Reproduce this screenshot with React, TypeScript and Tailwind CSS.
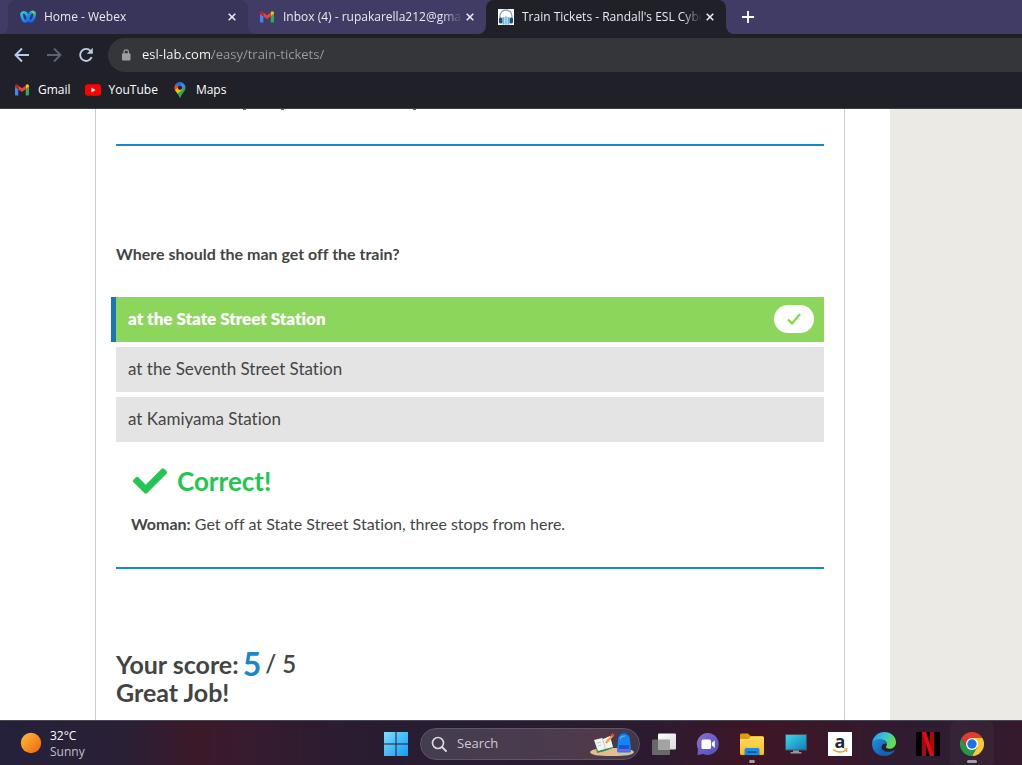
import React from "react";
import { FaCheck } from "react-icons/fa";

function GmailIcon() {
  return (
    <svg className="h-4 w-4 shrink-0" viewBox="0 0 16 16" aria-hidden="true">
      <path d="M1 4.200V12.500c0 .6.4 1 1 1h2.300V7.200L1 4.700z" fill="#4285f4" />
      <path d="M11.700 13.500H14c.6 0 1-.4 1-1V4.700l-3.300 2.500z" fill="#34a853" />
      <path d="M11.700 3.600v3.600L15 4.700V4.100c0-1.500-1.700-2.300-2.800-1.400z" fill="#fbbc04" />
      <path d="M4.300 7.200V3.500L8 6.300l3.700-2.800v3.700L8 10z" fill="#ea4335" />
      <path d="M1 4.100v.6l3.300 2.500V3.500l-.6-.8C2.600 1.800 1 2.600 1 4.100z" fill="#c5221f" />
    </svg>
  );
}

function WebexIcon() {
  return (
    <svg className="h-4 w-4 shrink-0" viewBox="0 0 16 16" aria-hidden="true">
      <defs>
        <linearGradient id="wx-a" x1="0" y1="0" x2="1" y2="1">
          <stop offset="0" stopColor="#27c6f5" />
          <stop offset="1" stopColor="#1560f0" />
        </linearGradient>
        <linearGradient id="wx-b" x1="0" y1="0" x2="0" y2="1">
          <stop offset="0" stopColor="#4fdc6c" />
          <stop offset="0.4" stopColor="#2a8fe8" />
          <stop offset="1" stopColor="#1b5ff5" />
        </linearGradient>
      </defs>
      <path d="M10.500 4C11.500 2.900 13 2.800 14.200 3.700c.8 2-.2 5.300-1.500 7.300-1.100 1.700-3.200 1.700-4.300-.2C7.500 9 7.300 6.300 6 4.300" fill="none" stroke="url(#wx-b)" strokeWidth="2.800" strokeLinecap="round" />
      <path d="M10.500 4C9 5.500 8.700 9 7.500 11c-1.200 1.900-3.200 1.700-4.200 0C2.300 9 1.300 6.500 1.700 4.700 2.300 3 4.700 2.800 6 4.300" fill="none" stroke="url(#wx-a)" strokeWidth="2.800" strokeLinecap="round" />
    </svg>
  );
}

function HeadphonesIcon() {
  return (
    <svg className="h-4 w-4 shrink-0" viewBox="0 0 16 16" aria-hidden="true">
      <rect width="16" height="16" fill="#fff" />
      <path d="M2 9V7a6 6 0 0 1 12 0v2" fill="none" stroke="#8fa3b5" strokeWidth="1.300" />
      <rect x="4" y="8" width="8" height="7.500" fill="#a9dcf2" />
      <path d="M5.500 8v7.500M8 7v9M10.500 8v7.500" stroke="#6fb0cf" strokeWidth="1" />
      <rect x="1" y="8.500" width="3.400" height="6" rx="1.500" fill="#17517b" />
      <rect x="11.600" y="8.500" width="3.400" height="6" rx="1.500" fill="#17517b" />
    </svg>
  );
}

function YouTubeIcon() {
  return (
    <svg className="h-4 w-4 shrink-0" viewBox="0 0 16 16" aria-hidden="true">
      <rect x="0" y="2.300" width="16" height="11.400" rx="2.600" fill="#f00" />
      <path d="M6.400 5.600v4.800L10.500 8z" fill="#fff" />
    </svg>
  );
}

function MapsIcon() {
  return (
    <svg className="h-4 w-4 shrink-0" viewBox="0 0 16 16" aria-hidden="true">
      <defs>
        <clipPath id="pin">
          <path d="M8 .3a5.500 5.500 0 0 0-5.500 5.500c0 2.200 1.200 3.400 2.600 5.100C6.300 12.400 7 13.700 7.300 15c.2.900 1.200.9 1.400 0 .3-1.300 1-2.600 2.200-4.100 1.400-1.700 2.600-2.900 2.600-5.100A5.500 5.500 0 0 0 8 .3z" />
        </clipPath>
      </defs>
      <g clipPath="url(#pin)">
        <rect width="16" height="16" fill="#34a853" />
        <path d="M0 0h16v3L9 8z" fill="#4285f4" />
        <path d="M2 3.500 5 0h5L8 5.500 5 7z" fill="#1a73e8" />
        <path d="M0 2l3.500-.2L8 5.600 3.500 10 0 9z" fill="#ea4335" />
        <path d="M2.500 8.600 8 3.500l2.200 4L5.300 12z" fill="#fbbc04" />
      </g>
      <circle cx="8" cy="5.800" r="2.100" fill="#202028" />
    </svg>
  );
}

function CloseIcon() {
  return (
    <svg className="h-2 w-2" viewBox="0 0 8 8" aria-hidden="true">
      <path d="M.7.7l6.600 6.600M7.300.7L.7 7.300" stroke="currentColor" strokeWidth="1.600" />
    </svg>
  );
}

type TabProps = { icon: React.ReactNode; title: string; tone: string; flare?: string };

function Tab({ icon, title, tone, flare }: TabProps) {
  return (
    <div className={"relative flex h-[34px] min-w-0 items-center rounded-t-lg pr-2 " + tone}>
      {flare && (
        <>
          <svg className={"absolute -left-2 bottom-0 h-2 w-2 " + flare} viewBox="0 0 8 8" aria-hidden="true">
            <path d="M8 0v8H0a8 8 0 0 0 8-8z" fill="currentColor" />
          </svg>
          <svg className={"absolute -right-2 bottom-0 z-10 h-2 w-2 " + flare} viewBox="0 0 8 8" aria-hidden="true">
            <path d="M0 0v8h8a8 8 0 0 1-8-8z" fill="currentColor" />
          </svg>
        </>
      )}
      <button type="button" className="flex min-w-0 flex-1 items-center gap-2">
        {icon}
        <span className="min-w-0 flex-1 overflow-hidden whitespace-nowrap text-left [mask-image:linear-gradient(to_right,#000_calc(100%-20px),transparent)]">
          {title}
        </span>
      </button>
      <button type="button" aria-label={"Close " + title} className="flex h-4 w-4 items-center justify-center">
        <CloseIcon />
      </button>
    </div>
  );
}

function BrowserHeader() {
  return (
    <header className="shrink-0 border-b border-[#3d3d4b] bg-[#202028] font-['Open_Sans','Noto_Sans',sans-serif] text-xs text-[#e9e9ee]">
      <div className="flex bg-[#403c66] pl-2">
        <Tab icon={<WebexIcon />} title="Home - Webex" tone="w-60 bg-[#38345a] pl-3" flare="text-[#38345a]" />
        <Tab icon={<GmailIcon />} title="Inbox (4) - rupakarella212@gma" tone="w-[238px] bg-[#403c66] pl-[11px]" />
        <Tab
          icon={<HeadphonesIcon />}
          title="Train Tickets - Randall's ESL Cybe"
          tone="w-60 bg-[#202028] pl-3"
          flare="text-[#202028]"
        />
        <button type="button" aria-label="New tab" className="ml-3.5 flex w-4 items-center justify-center">
          <svg className="h-3 w-3" viewBox="0 0 12 12" aria-hidden="true">
            <path d="M6 0v12M0 6h12" stroke="#fff" strokeWidth="1.800" />
          </svg>
        </button>
      </div>

      <div className="flex items-center gap-4 pl-3.5 pt-1">
        <button type="button" aria-label="Back">
          <svg className="h-4 w-4" viewBox="0 0 16 16" aria-hidden="true">
            <path d="M15 8H2M8 1.500L1.500 8 8 14.500" fill="none" stroke="#b9cbe8" strokeWidth="1.900" />
          </svg>
        </button>
        <button type="button" aria-label="Forward">
          <svg className="h-4 w-4" viewBox="0 0 16 16" aria-hidden="true">
            <path d="M1 8h13M8 1.500L14.500 8 8 14.500" fill="none" stroke="#5c6373" strokeWidth="1.900" />
          </svg>
        </button>
        <button type="button" aria-label="Reload">
          <svg className="h-4 w-4" viewBox="0 0 16 16" aria-hidden="true">
            <path d="M13.700 10.200A6 6 0 1 1 12.700 4" fill="none" stroke="#b9cbe8" strokeWidth="1.900" />
            <path d="M14.800.8v6H8.800z" fill="#b9cbe8" />
          </svg>
        </button>
        <div className="-ml-0.5 flex h-[34px] flex-1 items-center gap-2.5 rounded-l-full bg-[#353639] pl-3">
          <svg className="h-3 w-3 shrink-0" viewBox="0 0 12 12" aria-hidden="true">
            <rect x="2" y="4.300" width="8.500" height="7.200" rx="1" fill="#9a9ea5" />
            <path d="M4 5V3a2.200 2.200 0 0 1 4.400 0v2" fill="none" stroke="#9a9ea5" strokeWidth="1.200" />
          </svg>
          <input
            aria-label="Address"
            defaultValue="esl-lab.com/easy/train-tickets/"
            className="min-w-0 flex-1 bg-[linear-gradient(to_right,#ffffff_70px,#9a9ea5_70px)] bg-clip-text text-[13px] text-transparent outline-none"
          />
        </div>
      </div>

      <nav aria-label="Bookmarks" className="flex h-9 items-center gap-3.5 pl-3.5 text-white">
        <a href="#gmail" className="flex items-center gap-2">
          <GmailIcon /> Gmail
        </a>
        <a href="#youtube" className="flex items-center gap-2">
          <YouTubeIcon /> YouTube
        </a>
        <a href="#maps" className="flex items-center gap-2">
          <MapsIcon /> Maps
        </a>
      </nav>
    </header>
  );
}

const choices = [
  { label: "at the State Street Station", correct: true },
  { label: "at the Seventh Street Station", correct: false },
  { label: "at Kamiyama Station", correct: false },
];

function Quiz() {
  return (
    <main className="flex min-h-0 flex-1 overflow-hidden bg-white font-[Lato,sans-serif] text-[#444444] [font-variant-ligatures:none]">
      <div className="flex min-w-0 flex-1 pl-[95px] pr-[45px]">
        <article className="min-w-0 flex-1 border-x border-[#cccccc] px-5">
          <svg className="block h-px w-full" aria-hidden="true">
            <path d="M127 .5h3M165 .5h3M297 .5h3" stroke="#666" />
          </svg>
          <hr className="mt-[34px] border-t-2 border-[#1b87cb]" />
          <h2 className="mt-24 text-base font-bold leading-6">Where should the man get off the train?</h2>
          <ul className="mt-[31px] flex flex-col gap-[5px]">
            {choices.map((c) => (
              <li key={c.label} className="flex">
                <button
                  type="button"
                  className={
                    c.correct
                      ? "-ml-[5px] flex h-[45px] flex-1 items-center justify-between border-l-[5px] border-[#1577b5] bg-[#8cd65b] pb-0.5 pl-3 pr-2.5 text-[17px] font-extrabold text-white"
                      : "flex h-[45px] flex-1 items-center bg-[#e4e4e4] px-3 pb-0.5 text-[17px]"
                  }
                >
                  {c.label}
                  {c.correct && (
                    <span className="flex h-7 w-10 items-center justify-center rounded-full bg-white">
                      <svg className="h-3.5 w-3.5" viewBox="0 0 14 14" aria-hidden="true">
                        <path d="M1 7.500l4 4L13 2.200" fill="none" stroke="#77dc2c" strokeWidth="2" />
                      </svg>
                    </span>
                  )}
                </button>
              </li>
            ))}
          </ul>
          <div className="mt-[19px] px-[15px]">
            <p className="flex h-10 items-center gap-2.5 pl-0.5 text-[26px] font-bold text-[#22c651]">
              <FaCheck className="h-[34px] w-[34px]" aria-hidden="true" />
              Correct!
            </p>
            <p className="mt-[11px] text-base leading-6">
              <b>Woman:</b> Get off at State Street Station, three stops from here.
            </p>
          </div>
          <hr className="mt-[31px] border-t-2 border-[#1b87cb]" />
          <p className="mt-[81px] text-[25px] font-bold leading-7">
            <span className="flex items-center gap-1">
              Your score: <span className="text-[32px] font-bold text-[#1b87cb]">5</span>
              <span className="text-2xl font-semibold leading-7">/ 5</span>
            </span>
            Great Job!
          </p>
        </article>
      </div>
      <aside className="w-[132px] shrink-0 bg-[#ebeae5]" />
    </main>
  );
}

function AppButton({ label, running, children }: { label: string; running?: boolean; children: React.ReactNode }) {
  return (
    <button type="button" aria-label={label} className="relative flex h-11 w-11 items-center justify-center pt-0.5">
      <svg className="h-6 w-6" viewBox="0 0 24 24" aria-hidden="true">
        {children}
      </svg>
      {running && <span className="absolute bottom-0.5 h-[3px] w-1.5 rounded-full bg-[#a79ba5]" />}
    </button>
  );
}

function Taskbar() {
  return (
    <footer className="flex h-[45px] shrink-0 items-center border-t border-[#4b4653] bg-[linear-gradient(to_right,#24213a_0%,#2a2036_12%,#3b1929_19%,#381b2e_24%,#2a1c31_34%,#271d33_45%,#2c1b30_64%,#3f1626_74%,#37192c_83%,#2d1d33_91%,#351a2b_100%)] pr-7 font-['Open_Sans','Noto_Sans',sans-serif] text-xs">
      <div className="flex min-w-0 flex-1 items-center gap-2 pl-5">
        <svg className="h-[22px] w-[22px]" viewBox="0 0 22 22" aria-hidden="true">
          <defs>
            <linearGradient id="sun" x1="0" y1="0" x2="1" y2="1">
              <stop offset="0" stopColor="#f9c33a" />
              <stop offset="1" stopColor="#f2600c" />
            </linearGradient>
          </defs>
          <circle cx="11" cy="11" r="10.200" fill="url(#sun)" />
        </svg>
        <div className="pt-0.5 leading-4">
          <p className="text-white">32°C</p>
          <p className="text-[#c3bfc9]">Sunny</p>
        </div>
      </div>

      <AppButton label="Start">
        <defs>
          <linearGradient id="win" x1="0" y1="0" x2="1" y2="1">
            <stop offset="0" stopColor="#7fdcfd" />
            <stop offset="1" stopColor="#0f9bf5" />
          </linearGradient>
        </defs>
        <path d="M0 0h11.500v11.500H0zM12.500 0H24v11.500H12.500zM0 12.500h11.500V24H0zM12.500 12.500H24V24H12.500z" fill="url(#win)" />
      </AppButton>

      <label className="mx-0.5 mt-0.5 flex h-8 w-[220px] items-center gap-2.5 rounded-full border border-[#5f5565] bg-[linear-gradient(to_right,#443d50,#4a3b4d_60%,#513a4a_80%,#40374a)] pl-2.5 pr-1">
        <svg className="h-4 w-4" viewBox="0 0 16 16" aria-hidden="true">
          <circle cx="7" cy="7" r="5.500" fill="none" stroke="#dedbe0" strokeWidth="1.600" />
          <path d="M11 11l4 4" stroke="#dedbe0" strokeWidth="1.800" strokeLinecap="round" />
        </svg>
        <input
          aria-label="Search"
          placeholder="Search"
          className="w-20 min-w-0 flex-1 bg-transparent text-[13px] text-white outline-none placeholder:text-[#cfcad2]"
        />
        <svg className="h-6 w-[46px]" viewBox="0 0 46 24" aria-hidden="true">
          <path d="M1 20c2-3 8-4 22-4s20 1 22 4c-1 3-7 4-22 4S2 23 1 20z" fill="#e3bd8d" />
          <path d="M6 10l9-3 6-2 3 11-8 3-8 2z" fill="#2f8f55" />
          <path d="M5 8l8-2 1 1 7-3 3 11-8 2-7 2z" fill="#f4f4f2" />
          <path d="M13.500 7l3 10M8 11l4-1M9 14l3-1M17 8l3-1" stroke="#b9bdc0" strokeWidth=".8" />
          <path d="M17 11l7-8" stroke="#f5a033" strokeWidth="2.200" />
          <path d="M23 4l1.500-1.800" stroke="#e5483c" strokeWidth="2.800" />
          <path d="M32 4a3 3 0 0 1 6 0" fill="none" stroke="#1553c8" strokeWidth="1.500" />
          <path d="M29 9c0-5 2-7 6-7s6 2 6 7l1 9c0 2-1 2.500-2 2.500H30c-1 0-2-.5-2-2.500z" fill="#1384f5" />
          <path d="M30 13h10v6H30z" fill="#1656dc" />
          <path d="M30 18h10" stroke="#9c6bef" strokeWidth="1.500" />
          <path d="M31 7c1-3 3-3 5-3" fill="none" stroke="#5bb9ff" strokeWidth="1.200" />
        </svg>
      </label>

      <AppButton label="Task view">
        <defs>
          <linearGradient id="tv" x1="0" y1="0" x2="1" y2="1">
            <stop offset="0" stopColor="#ffffff" />
            <stop offset="1" stopColor="#d9d9d9" />
          </linearGradient>
        </defs>
        <rect x="0" y="7.500" width="18" height="15.500" rx="1" fill="#686868" />
        <rect x="6" y="1.500" width="18" height="16" rx="1" fill="url(#tv)" />
        <rect x="6" y="7.500" width="12" height="10" fill="#a3a3a3" />
      </AppButton>
      <AppButton label="Chat">
        <defs>
          <linearGradient id="chat" x1="0" y1="0" x2="1" y2="1">
            <stop offset="0" stopColor="#8b72c8" />
            <stop offset="1" stopColor="#4a4fc4" />
          </linearGradient>
        </defs>
        <path d="M12 1a11 11 0 1 1-4.800 21L1.500 23 2 17A11 11 0 0 1 12 1z" fill="url(#chat)" />
        <rect x="5.500" y="7.500" width="9.500" height="9.500" rx="1.500" fill="#fff" />
        <path d="M15.800 11l3-2.700v7.600l-3-2.700z" fill="#fff" />
      </AppButton>
      <AppButton label="File Explorer" running>
        <defs>
          <linearGradient id="folder" x1="0" y1="0" x2="0" y2="1">
            <stop offset="0" stopColor="#ffdc62" />
            <stop offset="1" stopColor="#fbb91d" />
          </linearGradient>
        </defs>
        <path d="M0 3c0-.9.600-1.500 1.500-1.500H8L10.500 4H22c1 0 2 .8 2 2v5H0z" fill="#e09a0b" />
        <path d="M0 7h8.500L11 4.500h11.500c.9 0 1.500.6 1.500 1.500v15.500c0 .9-.6 1.500-1.500 1.500h-21C.6 23 0 22.400 0 21.500z" fill="url(#folder)" />
        <path d="M4.500 23v-5c0-1.200.8-2 2-2h11c1.200 0 2 .8 2 2v5z" fill="#168be0" />
        <path d="M8 20h8" stroke="#0b5ea8" strokeWidth="1.800" strokeLinecap="round" />
      </AppButton>
      <AppButton label="Remote desktop">
        <defs>
          <linearGradient id="mon" x1="0" y1="0" x2="1" y2="1">
            <stop offset="0" stopColor="#3ad6e4" />
            <stop offset="1" stopColor="#147dbd" />
          </linearGradient>
        </defs>
        <path d="M9 18h6v2h2.500v1.500h-11V20H9z" fill="#8d9aa3" />
        <rect x="1" y="2" width="22" height="16.500" rx=".8" fill="#44525f" />
        <rect x="2" y="3" width="20" height="14.500" fill="url(#mon)" />
      </AppButton>
      <button type="button" aria-label="Amazon" className="flex h-11 w-11 items-center justify-center pt-0.5">
        <span className="flex h-6 w-6 flex-col items-center bg-white text-[18px] font-bold leading-[18px] text-[#222b38]">
          a
          <svg className="-mt-0.5 h-1.5 w-4 shrink-0" viewBox="0 0 16 6" aria-hidden="true">
            <path d="M1 1.500c4 3.300 9.500 3.300 12.800.7" fill="none" stroke="#f79a1c" strokeWidth="1.400" />
            <path d="M12 1l3-.2-.7 3" fill="none" stroke="#f79a1c" strokeWidth="1.100" />
          </svg>
        </span>
      </button>
      <AppButton label="Edge">
        <defs>
          <linearGradient id="edge-a" x1="0" y1="0" x2="1" y2=".4">
            <stop offset="0" stopColor="#2198df" />
            <stop offset=".5" stopColor="#35c1dc" />
            <stop offset="1" stopColor="#62e04b" />
          </linearGradient>
          <linearGradient id="edge-b" x1="0" y1="0" x2="1" y2="1">
            <stop offset="0" stopColor="#1d95e0" />
            <stop offset="1" stopColor="#0c4ba0" />
          </linearGradient>
        </defs>
        <path d="M0 11C1 4.500 6 0 12.300 0 19 0 24 4.700 24 10.300c0 4-3 6.500-6.300 6.500-3 0-4.300-1.200-3.600-2.200 1.900-2.600.5-6.600-4.600-6.900C5 7.400 1.500 8.500 0 11z" fill="url(#edge-a)" />
        <path d="M0 11.500C1.500 8 5 6.500 8.500 7c4 .5 6.200 2.800 6.200 5.200-2.500-1.500-5.700.5-5.200 4 .6 3.900 5.500 6.100 9.800 5.300a12 12 0 0 1-7.300 2.500C5 24 0 18.500 0 11.500z" fill="url(#edge-b)" />
        <path d="M9.500 14c-.6 4.500 5.500 8 12.500 4.300.6-.3 1 .1.600.7A12 12 0 0 1 15 23.700c-4.500-.5-8.500-5.200-5.500-9.700z" fill="#1464ae" />
      </AppButton>
      <AppButton label="Netflix">
        <rect width="24" height="24" fill="#000" />
        <path d="M6 0h4v24H6zM14 0h4v24h-4z" fill="#ad0710" />
        <path d="M6 0h4l8 24h-4z" fill="#e50914" />
      </AppButton>
      <div className="rounded-md bg-white/[0.03]">
        <button type="button" aria-label="Chrome" className="relative flex h-11 w-11 items-center justify-center pt-0.5">
          <svg className="h-6 w-6" viewBox="0 0 24 24" aria-hidden="true">
            <path d="M12 6h10.400A12 12 0 0 1 12 24l5.200-9z" fill="#fcc934" />
            <path d="M17.200 15L12 24A12 12 0 0 1 1.600 6l5.200 9z" fill="#279847" />
            <path d="M6.800 15L1.600 6A12 12 0 0 1 22.400 6H12z" fill="#e33b2e" />
            <circle cx="12" cy="12" r="6" fill="#fff" />
            <circle cx="12" cy="12" r="4.700" fill="#1a73e8" />
          </svg>
          <span className="absolute bottom-0.5 h-[3px] w-2.5 rounded-full bg-[#a79ba5]" />
        </button>
      </div>
    </footer>
  );
}

export default function App() {
  return (
    <div className="flex h-screen flex-col">
      <BrowserHeader />
      <Quiz />
      <Taskbar />
    </div>
  );
}
